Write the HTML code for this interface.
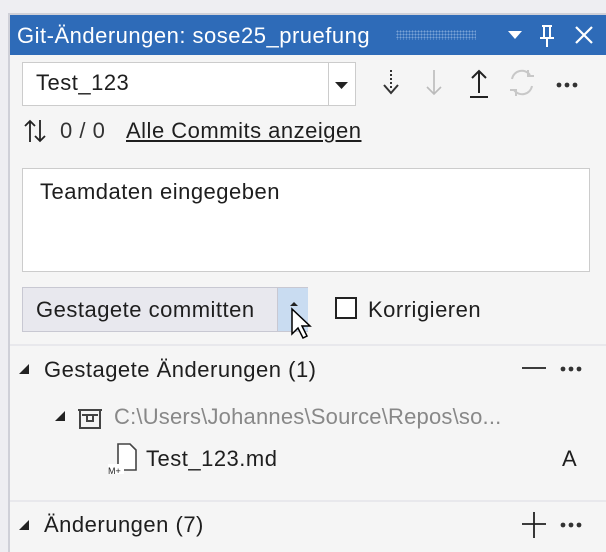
<!DOCTYPE html>
<html><head><style>
body{margin:0;width:606px;height:550px;background:#eeeef2;font-family:"Liberation Sans",sans-serif;overflow:hidden;position:relative;color:#1e1e1e}
.a{position:absolute}
.frame{left:8px;top:13px;width:598px;height:537px;background:#f5f5f5;border-left:2px solid #cfd0d8;border-top:2px solid #cfd0d8}
.title{left:10px;top:15px;width:596px;height:40px;background:#2e6bb8;color:#fff}
.t{font-size:22px;letter-spacing:0.5px;white-space:nowrap}
</style></head><body>
<div class="a frame"></div>
<div class="a title"><span class="a t" style="left:7px;top:8px">Git-Änderungen: sose25_pruefung</span>
<div class="a" style="left:386px;top:15px;width:80px;height:10px;background-image:radial-gradient(#7aa3d6 0.8px,transparent 1px);background-size:3px 3px"></div>
<svg class="a" style="left:494px;top:8px" width="90" height="26"><path d="M4 8h14l-7 8z" fill="#fff"/><path d="M38 3h10M40 3v12M46 3v12M36 15h14M43 15v9" stroke="#fff" stroke-width="2" fill="none"/><path d="M72 4l16 16M88 4L72 20" stroke="#fff" stroke-width="2.2"/></svg>
</div>
<div class="a" style="left:22px;top:62px;width:334px;height:44px;background:#fff;border:1px solid #ccc;box-sizing:border-box"></div>
<div class="a" style="left:328px;top:63px;width:1px;height:42px;background:#ccc"></div>
<svg class="a" style="left:334px;top:80px" width="16" height="10"><path d="M1 2h13l-6.5 7z" fill="#222"/></svg>
<span class="a t" style="left:36px;top:70px">Test_123</span>
<svg class="a" style="left:378px;top:66px" width="210" height="36"><path d="M13 4v20" stroke="#333" stroke-width="2" stroke-dasharray="2 2"/><path d="M6 19l7 8 7-8" stroke="#333" stroke-width="2" fill="none"/><path d="M56 4v24M49 21l7 7 7-7" stroke="#bbb" stroke-width="1.6" fill="none"/><path d="M101 5v22M94 12l7-7 7 7M92 31h18" stroke="#222" stroke-width="2" fill="none"/><path d="M134 13a10 10 0 0 1 18-4M154 20a10 10 0 0 1-18 4M150 4v6h6M138 30v-6h-6" stroke="#c8c8c8" stroke-width="2" fill="none"/><circle cx="181" cy="19" r="2.4" fill="#333"/><circle cx="189" cy="19" r="2.4" fill="#333"/><circle cx="197" cy="19" r="2.4" fill="#333"/></svg>
<svg class="a" style="left:22px;top:117px" width="30" height="28"><path d="M8 25V4M3 9l5-5 5 5M18 3v21M13 19l5 5 5-5" stroke="#222" stroke-width="1.8" fill="none"/></svg>
<span class="a t" style="left:60px;top:118px;color:#333">0 / 0</span>
<span class="a t" style="left:126px;top:118px;text-decoration:underline">Alle Commits anzeigen</span>
<div class="a" style="left:22px;top:168px;width:568px;height:104px;background:#fff;border:1px solid #ccc;box-sizing:border-box"></div>
<span class="a t" style="left:40px;top:179px">Teamdaten eingegeben</span>
<div class="a" style="left:22px;top:287px;width:286px;height:45px;background:#e8e8ee;border:1px solid #c8c8d2;box-sizing:border-box"></div>
<div class="a" style="left:277px;top:288px;width:30px;height:43px;background:#c9dcf1;border-left:1px solid #c8c8d2"></div>
<span class="a t" style="left:36px;top:297px">Gestagete committen</span>
<svg class="a" style="left:284px;top:300px" width="34" height="46"><path d="M6 6h8l-4 -4z" fill="#222"/><path d="M8 9v25l6-6 5 10 4-2-5-10h8z" fill="#fff" stroke="#000" stroke-width="1.5"/></svg>
<div class="a" style="left:335px;top:297px;width:22px;height:22px;border:2px solid #222;box-sizing:border-box;background:#fff"></div>
<span class="a t" style="left:368px;top:297px">Korrigieren</span>
<div class="a" style="left:10px;top:344px;width:596px;height:2px;background:#e8e8ec"></div>
<svg class="a" style="left:18px;top:362px" width="14" height="14"><path d="M11 2v10H1z" fill="#222"/></svg>
<span class="a t" style="left:44px;top:357px">Gestagete Änderungen (1)</span>
<svg class="a" style="left:520px;top:358px" width="66" height="24"><path d="M2 10h24" stroke="#222" stroke-width="1.8"/><circle cx="43" cy="11" r="2.4" fill="#333"/><circle cx="51" cy="11" r="2.4" fill="#333"/><circle cx="59" cy="11" r="2.4" fill="#333"/></svg>
<svg class="a" style="left:48px;top:406px" width="60" height="24"><path d="M17 5v10H7z" fill="#222"/><path d="M30 4h24M32 4v18h20V4M34 9h16M39 9v6h6V9" stroke="#444" stroke-width="2" fill="none"/></svg>
<span class="a t" style="left:114px;top:404px;color:#888;letter-spacing:0.2px">C:\Users\Johannes\Source\Repos\so...</span>
<svg class="a" style="left:104px;top:440px" width="36" height="36"><path d="M14 4h12l6 6v20H14z" fill="#fff" stroke="#444" stroke-width="1.6"/><rect x="4" y="24" width="16" height="10" fill="#fff"/><text x="4" y="34" font-size="9" font-family="Liberation Sans" fill="#222">M+</text></svg>
<span class="a t" style="left:146px;top:446px">Test_123.md</span>
<span class="a t" style="left:562px;top:446px">A</span>
<div class="a" style="left:10px;top:500px;width:596px;height:2px;background:#e8e8ec"></div>
<svg class="a" style="left:18px;top:518px" width="14" height="14"><path d="M11 2v10H1z" fill="#222"/></svg>
<span class="a t" style="left:44px;top:512px">Änderungen (7)</span>
<svg class="a" style="left:520px;top:510px" width="66" height="30"><path d="M2 14h24M14 2v26" stroke="#222" stroke-width="1.8"/><circle cx="43" cy="15" r="2.4" fill="#333"/><circle cx="51" cy="15" r="2.4" fill="#333"/><circle cx="59" cy="15" r="2.4" fill="#333"/></svg>
</body></html>
